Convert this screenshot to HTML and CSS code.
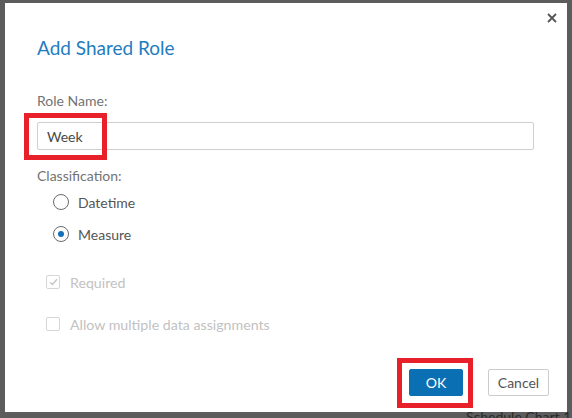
FILE: index.html
```html
<!DOCTYPE html>
<html>
<head>
<meta charset="utf-8">
<link rel="stylesheet" href="styles.css">
</head>
<body>
<div class="backdrop-text">Schedule Chart 1</div>
<div class="dialog">
  <div class="header">
    <h1 class="title">Add Shared Role</h1>
    <button class="close" aria-label="Close">
      <svg width="10" height="10" viewBox="0 0 10 10"><path d="M1 1L9 9M9 1L1 9" stroke="#555" stroke-width="1.8" fill="none"/></svg>
    </button>
  </div>
  <div class="body">
    <label class="field-label">Role Name:</label>
    <div class="input">Week</div>
    <div class="field-label classification">Classification:</div>
    <div class="radios">
      <div class="radio-row"><span class="radio"></span><span class="radio-text">Datetime</span></div>
      <div class="radio-row"><span class="radio checked"></span><span class="radio-text">Measure</span></div>
    </div>
    <div class="checks">
      <div class="check-row"><span class="check">
        <svg width="9" height="8" viewBox="0 0 9 8"><path d="M1 4.2L3.4 6.5L8 1.2" stroke="#c4c4c4" stroke-width="1.3" fill="none"/></svg>
      </span><span class="check-text">Required</span></div>
      <div class="check-row"><span class="check"></span><span class="check-text">Allow multiple data assignments</span></div>
    </div>
  </div>
  <div class="footer">
    <button class="btn primary">OK</button>
    <button class="btn secondary">Cancel</button>
  </div>
  <div class="mark mark-input"></div>
  <div class="mark mark-ok"></div>
</div>
</body>
</html>
```
FILE: styles.css
```css
html, body {
  margin: 0;
  padding: 0;
}
body {
  width: 572px;
  height: 418px;
  background: #5c5c5c;
  overflow: hidden;
  position: relative;
  font-family: Lato, "Open Sans", sans-serif;
}
.backdrop-text {
  position: absolute;
  left: 466px;
  top: 408px;
  font-size: 14px;
  line-height: 18px;
  color: #2a2a2a;
  white-space: nowrap;
}
.dialog {
  position: relative;
  margin: 3px 0 0 5px;
  width: 562px;
  height: 409px;
  background: #fff;
  box-sizing: border-box;
  display: flex;
  flex-direction: column;
}
.header {
  display: flex;
  justify-content: space-between;
  align-items: flex-start;
  padding: 0 10px 0 32px;
}
.title {
  margin: 33px 0 0 0;
  font-size: 19px;
  font-weight: 400;
  line-height: 24px;
  color: #1f7dbf;
}
.close {
  margin-top: 10px;
  border: 0;
  background: none;
  padding: 0;
  width: 10px;
  height: 10px;
  display: flex;
}
.body {
  padding: 0 33px 0 32px;
  display: flex;
  flex-direction: column;
}
.field-label {
  font-size: 14px;
  color: #737373;
  line-height: 18px;
  margin-top: 32px;
}
.input {
  margin-top: 12px;
  height: 28px;
  box-sizing: border-box;
  border: 1px solid #cfcfcf;
  border-radius: 2px;
  padding: 0 9px;
  display: flex;
  align-items: center;
  font-size: 14px;
  color: #4a4a4a;
}
.classification {
  margin-top: 17px;
}
.radios {
  display: flex;
  flex-direction: column;
  gap: 16px;
  padding-left: 16px;
  margin-top: 9px;
}
.radio-row, .check-row {
  display: flex;
  align-items: center;
  height: 16px;
}
.radio {
  width: 16px;
  height: 16px;
  box-sizing: border-box;
  border: 1px solid #6a6a6a;
  border-radius: 50%;
  display: flex;
  align-items: center;
  justify-content: center;
}
.radio.checked::after {
  content: "";
  width: 6px;
  height: 6px;
  border-radius: 50%;
  background: #1570b8;
}
.radio-text {
  margin-left: 9px;
  font-size: 14px;
  color: #555;
}
.checks {
  display: flex;
  flex-direction: column;
  gap: 26px;
  padding-left: 9px;
  margin-top: 32px;
}
.check {
  width: 14px;
  height: 14px;
  box-sizing: border-box;
  border: 1px solid #d6d6d6;
  border-radius: 2px;
  display: flex;
  align-items: center;
  justify-content: center;
}
.check-text {
  margin-left: 10px;
  font-size: 14.2px;
  color: #c2c2c2;
}
.footer {
  margin-top: auto;
  display: flex;
  justify-content: flex-end;
  gap: 25px;
  padding: 0 18px 16px 0;
}
.btn {
  height: 27px;
  box-sizing: border-box;
  font-family: Lato, "Open Sans", sans-serif;
  font-size: 14px;
  border-radius: 2px;
  padding: 0;
}
.primary {
  width: 54px;
  background: #0b6fb3;
  border: 1px solid #0b6fb3;
  color: #fff;
}
.secondary {
  width: 61px;
  background: #fff;
  border: 1px solid #cccccc;
  color: #555;
}
.mark {
  position: absolute;
  border: 5px solid #e8202a;
  box-sizing: border-box;
}
.mark-input {
  left: 19px;
  top: 110px;
  width: 83px;
  height: 47px;
}
.mark-ok {
  left: 392px;
  top: 355px;
  width: 76px;
  height: 50px;
}
```
